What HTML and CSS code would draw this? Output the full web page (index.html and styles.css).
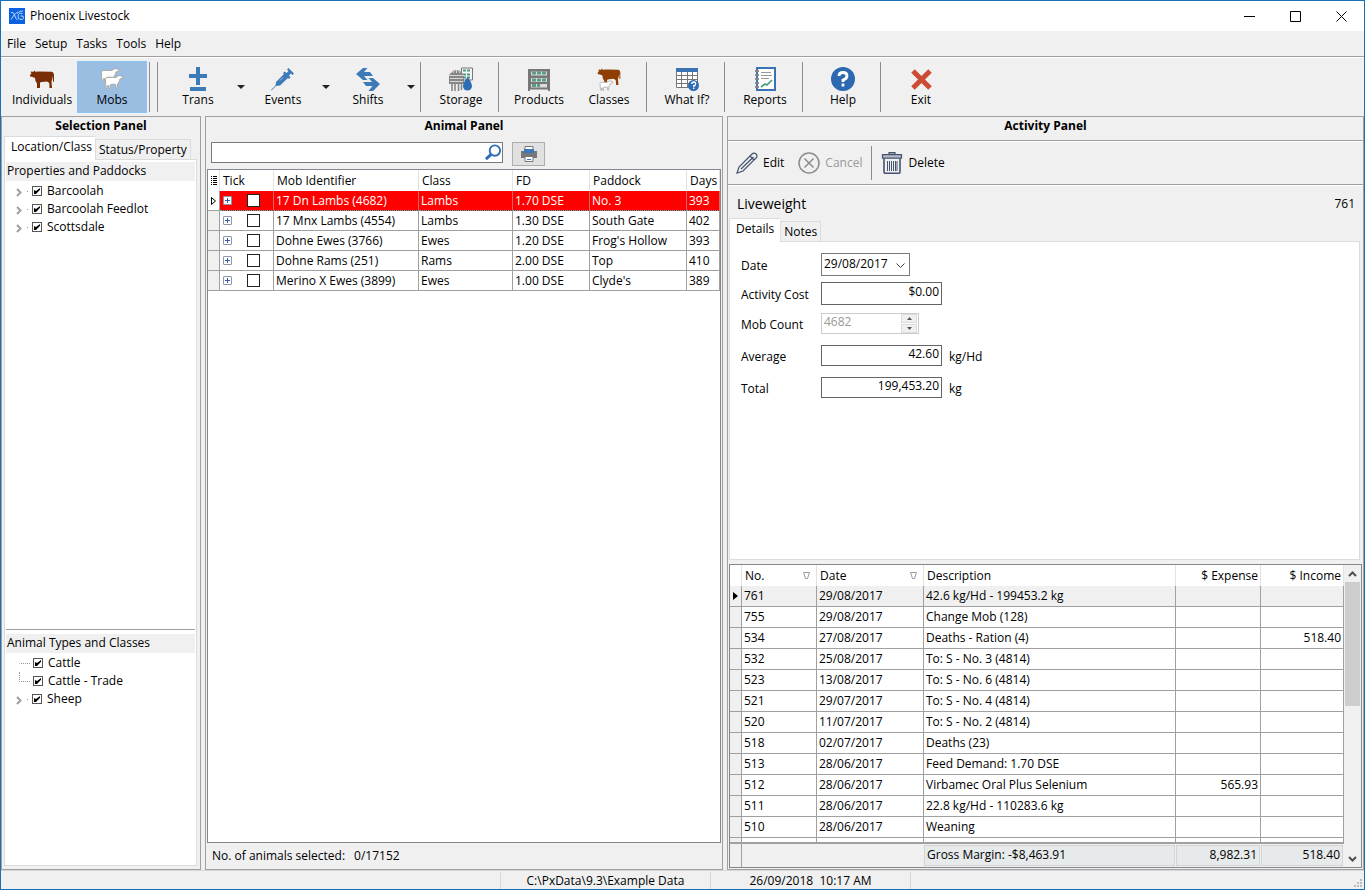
FILE: index.html
```html
<!DOCTYPE html>
<html lang="en">
<head>
<meta charset="utf-8">
<title>Phoenix Livestock</title>
<link rel="stylesheet" href="styles.css">
</head>
<body>
<svg class="defs" aria-hidden="true">
  <symbol id="cow" viewBox="0 0 24 18"><path d="M1.500 1.500L3.500 2 4 .5 5.500 1.800 9 1.500l13 .3 1.500 1.200.5 2v6.500l-1 .5V6l-.8 3.500-.7 2 .5 6.500H19.500l-.3-5-2.200-1.500-5 .5-2 .5V18H7v-4.500L5.500 11 5 8 2.500 7 .2 6.500 0 5l1.500-1.800L.5 2z"/></symbol>
  <symbol id="sheep" viewBox="-1 -1 23 17"><path d="M.5 4.500Q1 2 4 2.500h8Q13.500 1.500 14.500.8L17 .2l.5.800 2.500 1-.5 1.500-3 .7-.5 2.300-2 3-.5 5h-1.200l-.5-4.500H7L5.500 11 6 15H4.800L3.500 11 2.500 12.500v2.200H1.300L1 12z"/></symbol>
  <symbol id="chev" viewBox="0 0 6 8"><path d="M1 0.500L4.500 4 1 7.500" fill="none" stroke="#a0a0a0" stroke-width="2"/></symbol>
</svg>
<div class="window">
  <header class="titlebar">
    <svg class="logo" viewBox="0 0 16 16"><rect width="16" height="16" fill="#0a62e0"/><path d="M2 4.500q2.500-1 3.500 2.500T8.500 12M8.500 4Q5 6 2 11.500M8 5.500q3-3 6-2.500M13.500 5.500q-4-1-4.500 2.500t3 3.500 2-3.500H11.500" fill="none" stroke="#b9d4fb"/></svg>
    <span class="caption">Phoenix Livestock</span>
    <button class="winbtn" aria-label="Minimize"><svg width="11" height="11"><path d="M0 5.500h11" stroke="#000"/></svg></button>
    <button class="winbtn" aria-label="Maximize"><svg width="11" height="11"><path d="M.5.5h10v10H.5z" fill="none" stroke="#000"/></svg></button>
    <button class="winbtn" aria-label="Close"><svg width="11" height="11"><path d="M.5.5l10 10M10.500.5l-10 10" stroke="#000"/></svg></button>
  </header>
  <nav class="menubar"><button>File</button><button>Setup</button><button>Tasks</button><button>Tools</button><button>Help</button></nav>

  <div class="toolbar">
    <button class="tool"><svg viewBox="0 0 24 24"><use href="#cow" y="3" width="24" height="18" fill="#7a2e06"/></svg>Individuals</button>
    <button class="tool active"><svg viewBox="0 0 24 24"><g fill="#fff" stroke="#a8a49e"><use href="#sheep" x="0" y="0" width="21" height="16"/><use href="#sheep" x="4" y="7" width="21" height="16"/></g></svg>Mobs</button>
    <span class="sep"></span><span class="sep"></span>
    <button class="tool"><svg viewBox="0 0 24 24"><path d="M10 0h4v7h7v4h-7v7h-4v-7H3V7h7zM4 20h16v4H4z" fill="#3d7ab8"/></svg>Trans</button>
    <button class="drop" aria-label="Trans options"><svg viewBox="0 0 8 4"><path d="M0 0h8L4 4z"/></svg></button>
    <button class="tool"><svg viewBox="0 0 24 24"><path d="M17.500 1l5.500 5.500-1.500 1.500-1.500-1.500-2 2 1.500 2-1.500 1.500-1-1L9 18.500l-4 .5-4.500 4.500L0 23l4.500-4.500L5 15l8-8-1-1 1.500-1.500 2 1.500 2-2L16 2.500z" fill="#3d7ab8"/><path d="M9 13.500l3-3" stroke="#9fbfdf" stroke-width="1"/></svg>Events</button>
    <button class="drop" aria-label="Events options"><svg viewBox="0 0 8 4"><path d="M0 0h8L4 4z"/></svg></button>
    <button class="tool"><svg viewBox="0 0 24 24"><path d="M0 7l7-6h4.500L8 5h6l3 4H8l3.500 4H7zM24 17l-7 7h-4.500l4-5H10l-3-4h9l-3.500-4H17z" fill="#3d7ab8"/></svg>Shifts</button>
    <button class="drop" aria-label="Shifts options"><svg viewBox="0 0 8 4"><path d="M0 0h8L4 4z"/></svg></button>
    <span class="sep"></span>
    <button class="tool"><svg viewBox="0 0 24 24"><path d="M12.500 1h11v12h-11z" fill="#f4f4f4" stroke="#777"/><path d="M14 3.500h8M14 7.500h8M14 10.500h8" stroke="#4d9b80" stroke-width="2" stroke-dasharray="3 1"/><path d="M0 8l5-5h5l5 5v9H0z" fill="#868686"/><path d="M0 8.500h15M1 11.500h13M1 14.500h13" stroke="#d6d6d6"/><path d="M4 6l2-3M7.500 6V3M11 6L9 3" stroke="#d6d6d6"/><path d="M3 17v7M6 17v7M9.500 17v7M12.500 17v6" stroke="#888" stroke-width="1.600"/><path d="M18.500 10q4.500 6 4.500 9a4.500 4.500 0 0 1-9 0q0-3 4.500-9z" fill="#2d6db5"/></svg>Storage</button>
    <span class="sep"></span>
    <button class="tool"><svg viewBox="0 0 24 24"><path d="M1 2h22v22h-2v-1.500H3V24H1z" fill="#777"/><path d="M4 4.500h16v4H4zM4 11h16v4H4zM4 17h16v3.500H4z" fill="#d9dcdb"/><path d="M5 6h14M5 13h14M5 18.500h8" stroke="#5f9c86" stroke-width="3" stroke-dasharray="4 1"/></svg>Products</button>
    <button class="tool"><svg viewBox="0 0 24 24"><use href="#cow" width="24" height="17" y="1" fill="#8e3d05"/><use href="#sheep" x="2" y="13" width="15" height="11" fill="#fff" stroke="#999"/></svg>Classes</button>
    <span class="sep"></span>
    <button class="tool"><svg viewBox="0 0 24 24"><path d="M1.500 1.500h21v19h-21z" fill="#fff" stroke="#777"/><path d="M1 1h22v4H1z" fill="#3a73b4"/><path d="M1.500 8.500h21M1.500 12.500h21M1.500 16.500h21M6.500 5v15M12.500 5v15M17.500 5v15" stroke="#777"/><circle cx="18.500" cy="18.500" r="5.500" fill="#2d6db5"/><path d="M16.800 17q0-2 2-2t1.700 2-1.800 1.700v1M18.700 20.500V22" fill="none" stroke="#fff" stroke-width="1.400"/></svg>What If?</button>
    <span class="sep"></span>
    <button class="tool"><svg viewBox="0 0 24 24"><path d="M4 1h18v22H4z" fill="#fff" stroke="#3a73b4" stroke-width="2"/><path d="M8 5.500h10M8 8.500h11M8 11.500h8" stroke="#999"/><path d="M8 20l4-3 2 1 5-5" fill="none" stroke="#3f9b74" stroke-width="1.600"/><path d="M2 4h4M2 8h4M2 12h4M2 16h4M2 20h4" stroke="#888" stroke-width="2"/></svg>Reports</button>
    <span class="sep"></span>
    <button class="tool"><svg viewBox="0 0 24 24"><circle cx="12" cy="12" r="12" fill="#2c69b0"/><path d="M8 9q0-3.500 4-3.500t4 3.200-4 4.300v2M12 16.500v3" fill="none" stroke="#fff" stroke-width="2.800"/></svg>Help</button>
    <span class="sep"></span>
    <button class="tool"><svg viewBox="0 0 24 24"><path d="M4 4l17 17M21 4L4 21" stroke="#cb4b33" stroke-width="5"/></svg>Exit</button>
  </div>

  <main class="panels">
    <section class="panel selection">
      <h2>Selection Panel</h2>
      <div class="tabs"><button class="tab on">Location/Class</button><button class="tab">Status/Property</button></div>
      <div class="page">
        <div class="treebox grow">
          <h3>Properties and Paddocks</h3>
          <ul class="tree">
            <li><svg class="chev"><use href="#chev"/></svg><label><input type="checkbox" checked>Barcoolah</label></li>
            <li><svg class="chev"><use href="#chev"/></svg><label><input type="checkbox" checked>Barcoolah Feedlot</label></li>
            <li><svg class="chev"><use href="#chev"/></svg><label><input type="checkbox" checked>Scottsdale</label></li>
          </ul>
        </div>
        <div class="treebox types">
          <h3>Animal Types and Classes</h3>
          <ul class="tree">
            <li class="leaf first"><label><input type="checkbox" checked>Cattle</label></li>
            <li class="leaf"><label><input type="checkbox" checked>Cattle - Trade</label></li>
            <li><svg class="chev"><use href="#chev"/></svg><label><input type="checkbox" checked>Sheep</label></li>
          </ul>
        </div>
      </div>
    </section>

    <section class="panel animal">
      <h2>Animal Panel</h2>
      <div class="searchrow">
        <div class="search"><input type="text" aria-label="Search animals"><svg viewBox="0 0 18 18"><circle cx="11" cy="7" r="5.500" fill="none" stroke="#2d6db5" stroke-width="2"/><path d="M7 11l-5.500 5" stroke="#2d6db5" stroke-width="3"/></svg></div>
        <button class="print" aria-label="Print"><svg viewBox="0 0 16 16"><path d="M4 .5h8V4H4z" fill="#fff" stroke="#777"/><path d="M0 5h16v7H0z" fill="#777"/><path d="M3 3h10v4H3z" fill="#3a78bb"/><path d="M4 10.500h8v5H4z" fill="#fff" stroke="#777"/><path d="M6 13.500h4" stroke="#3a78bb"/></svg></button>
      </div>
      <div class="gridbox">
        <table class="mobs">
          <colgroup><col class="w12"><col class="w54"><col class="w145"><col class="w94"><col class="w77"><col class="w97"><col></colgroup>
          <thead><tr><th><svg class="lines" viewBox="0 0 6 9"><path d="M0 .5h1M2 .5h4M0 2.500h1M2 2.500h4M0 4.500h1M2 4.500h4M0 6.500h1M2 6.500h4M0 8.500h1M2 8.500h4" stroke="#000"/></svg></th><th>Tick</th><th>Mob Identifier</th><th>Class</th><th>FD</th><th>Paddock</th><th>Days</th></tr></thead>
          <tbody>
            <tr class="sel"><td><svg class="ptr" viewBox="0 0 5 8"><path d="M.5.5L4.500 4l-4 3.500z" fill="#fff" stroke="#000"/></svg></td><td><button class="plus" aria-label="Expand"></button><input type="checkbox" aria-label="Tick 17 Dn Lambs"></td><td>17 Dn Lambs (4682)</td><td>Lambs</td><td>1.70 DSE</td><td>No. 3</td><td>393</td></tr>
            <tr><td></td><td><button class="plus" aria-label="Expand"></button><input type="checkbox" aria-label="Tick 17 Mnx Lambs"></td><td>17 Mnx Lambs (4554)</td><td>Lambs</td><td>1.30 DSE</td><td>South Gate</td><td>402</td></tr>
            <tr><td></td><td><button class="plus" aria-label="Expand"></button><input type="checkbox" aria-label="Tick Dohne Ewes"></td><td>Dohne Ewes (3766)</td><td>Ewes</td><td>1.20 DSE</td><td>Frog's Hollow</td><td>393</td></tr>
            <tr><td></td><td><button class="plus" aria-label="Expand"></button><input type="checkbox" aria-label="Tick Dohne Rams"></td><td>Dohne Rams (251)</td><td>Rams</td><td>2.00 DSE</td><td>Top</td><td>410</td></tr>
            <tr><td></td><td><button class="plus" aria-label="Expand"></button><input type="checkbox" aria-label="Tick Merino X Ewes"></td><td>Merino X Ewes (3899)</td><td>Ewes</td><td>1.00 DSE</td><td>Clyde's</td><td>389</td></tr>
          </tbody>
        </table>
      </div>
      <p class="count"><span>No. of animals selected:</span><span>0/17152</span></p>
    </section>

    <section class="panel activity">
      <h2>Activity Panel</h2>
      <div class="actions">
        <button><svg class="pencil" viewBox="0 0 22 22"><path d="M1 21l2-6L16 2q2-2 4 0t0 4L7 19zM14 4l4 4M17.500 5L5 17" fill="none" stroke="#44546e" stroke-width="1.200"/></svg>Edit</button>
        <button disabled><svg viewBox="0 0 22 22"><circle cx="11" cy="11" r="10" fill="none" stroke="#8c8c8c" stroke-width="1.500"/><path d="M6.500 6.500l9 9M15.500 6.500l-9 9" stroke="#8c8c8c" stroke-width="1.500"/></svg>Cancel</button>
        <span class="bar"></span>
        <button><svg viewBox="0 0 22 22"><path d="M8 2V.7h6V2M1.500 2.700h19v3.500h-19z" fill="#b8bdc6" stroke="#44546e" stroke-width="1.200"/><path d="M3 6.500V20q0 1.300 1.500 1.300h13Q19 21.300 19 20V6.500" fill="none" stroke="#44546e" stroke-width="1.600"/><path d="M6.500 9v10M8.500 9v10M10.500 9v10M12.500 9v10M14.500 9v10M16 9v10" stroke="#44546e"/></svg>Delete</button>
      </div>
      <div class="heading"><strong>Liveweight</strong><span>761</span></div>
      <div class="tabs"><button class="tab on">Details</button><button class="tab">Notes</button></div>
      <form class="page details">
        <div class="field"><label for="date">Date</label><div class="combo"><select id="date"><option>29/08/2017</option></select><svg viewBox="0 0 9 5"><path d="M.5.5l4 4 4-4" fill="none" stroke="#444"/></svg></div></div>
        <div class="field cost"><label for="cost">Activity Cost</label><input id="cost" class="tall" type="text" value="$0.00"></div>
        <div class="field"><label for="mobcount">Mob Count</label><div class="spin"><input id="mobcount" type="text" value="4682" disabled><span class="steps"><button type="button" disabled aria-label="Increase"><svg viewBox="0 0 5 3"><path d="M0 3h5L2.500 0z"/></svg></button><button type="button" disabled aria-label="Decrease"><svg viewBox="0 0 5 3"><path d="M0 0h5L2.500 3z"/></svg></button></span></div></div>
        <div class="field"><label for="avg">Average</label><input id="avg" type="text" value="42.60"><span>kg/Hd</span></div>
        <div class="field"><label for="total">Total</label><input id="total" type="text" value="199,453.20"><span>kg</span></div>
      </form>
      <div class="ledger">
        <div class="ledgermain">
          <div class="rows">
            <table class="acts">
              <colgroup><col class="w12"><col class="w75"><col class="w107"><col><col class="w85"><col class="w83"></colgroup>
              <thead><tr><th></th><th><span class="h">No.<svg viewBox="0 0 7 7"><path d="M.5.5h6L4.500 6.500h-2z" fill="none" stroke="#999"/></svg></span></th><th><span class="h">Date<svg viewBox="0 0 7 7"><path d="M.5.5h6L4.500 6.500h-2z" fill="none" stroke="#999"/></svg></span></th><th>Description</th><th class="num">$ Expense</th><th class="num">$ Income</th></tr></thead>
              <tbody>
                <tr class="cur"><td><svg class="ptr" viewBox="0 0 5 8"><path d="M0 0l5 4-5 4z"/></svg></td><td>761</td><td>29/08/2017</td><td>42.6 kg/Hd - 199453.2 kg</td><td class="num"></td><td class="num"></td></tr>
                <tr><td></td><td>755</td><td>29/08/2017</td><td>Change Mob (128)</td><td class="num"></td><td class="num"></td></tr>
                <tr><td></td><td>534</td><td>27/08/2017</td><td>Deaths - Ration (4)</td><td class="num"></td><td class="num">518.40</td></tr>
                <tr><td></td><td>532</td><td>25/08/2017</td><td>To: S - No. 3 (4814)</td><td class="num"></td><td class="num"></td></tr>
                <tr><td></td><td>523</td><td>13/08/2017</td><td>To: S - No. 6 (4814)</td><td class="num"></td><td class="num"></td></tr>
                <tr><td></td><td>521</td><td>29/07/2017</td><td>To: S - No. 4 (4814)</td><td class="num"></td><td class="num"></td></tr>
                <tr><td></td><td>520</td><td>11/07/2017</td><td>To: S - No. 2 (4814)</td><td class="num"></td><td class="num"></td></tr>
                <tr><td></td><td>518</td><td>02/07/2017</td><td>Deaths (23)</td><td class="num"></td><td class="num"></td></tr>
                <tr><td></td><td>513</td><td>28/06/2017</td><td>Feed Demand: 1.70 DSE</td><td class="num"></td><td class="num"></td></tr>
                <tr><td></td><td>512</td><td>28/06/2017</td><td>Virbamec Oral Plus Selenium</td><td class="num">565.93</td><td class="num"></td></tr>
                <tr><td></td><td>511</td><td>28/06/2017</td><td>22.8 kg/Hd - 110283.6 kg</td><td class="num"></td><td class="num"></td></tr>
                <tr><td></td><td>510</td><td>28/06/2017</td><td>Weaning</td><td class="num"></td><td class="num"></td></tr>
                <tr><td></td><td></td><td></td><td></td><td class="num"></td><td class="num"></td></tr>
              </tbody>
            </table>
          </div>
          <div class="totals"><span class="ind"></span><span></span><span class="cell">Gross Margin: -$8,463.91</span><span class="cell num">8,982.31</span><span class="cell num">518.40</span></div>
        </div>
        <div class="scroll"><button aria-label="Scroll up"><svg viewBox="0 0 9 6"><path d="M1 5l3.500-3.500L8 5" fill="none" stroke="#505050" stroke-width="2"/></svg></button><span class="thumb"></span><button aria-label="Scroll down"><svg viewBox="0 0 9 6"><path d="M1 1l3.500 3.500L8 1" fill="none" stroke="#505050" stroke-width="2"/></svg></button></div>
      </div>
    </section>
  </main>

  <footer class="status"><span></span><span>C:\PxData\9.3\Example Data</span><span>26/09/2018&nbsp; 10:17 AM</span><svg class="grip" viewBox="0 0 8 8"><path d="M6 0h2v2H6zM3 3h2v2H3zM6 3h2v2H6zM0 6h2v2H0zM3 6h2v2H3zM6 6h2v2H6z" fill="#bdbdbd"/></svg></footer>
</div>
</body>
</html>
```
FILE: styles.css
```css
* { box-sizing: border-box; }
body { margin: 0; background: #f0f0f0; color: #000; font: 12px/16px "Open Sans", "Noto Sans", sans-serif; }
button, input, select { font: inherit; color: inherit; margin: 0; padding: 0; border: 0; border-radius: 0; background: none; }
h2, h3, p, ul { margin: 0; padding: 0; }
ul { list-style: none; }
svg { display: block; flex: none; }
.defs { position: absolute; width: 0; height: 0; }

.window { display: flex; flex-direction: column; height: 100vh; border: 1px solid #1771b6; overflow: hidden; }
.titlebar { display: flex; align-items: center; height: 30px; flex: none; background: #fff; padding-left: 8px; }
.logo { width: 16px; height: 16px; }
.caption { flex: 1; padding-left: 5px; }
.winbtn { width: 46px; height: 29px; display: flex; align-items: center; justify-content: center; }
.menubar { display: flex; align-items: center; height: 26px; flex: none; padding-left: 6px; gap: 9px; border-bottom: 1px solid #a0a0a0; }

.toolbar { display: flex; align-items: stretch; height: 59px; flex: none; padding: 3px 6px; border-top: 1px solid #fff; }
.tool { width: 70px; flex: none; display: flex; flex-direction: column; align-items: center; gap: 1px; padding-top: 5px; border: 1px solid transparent; white-space: nowrap; }
.tool svg { width: 24px; height: 24px; }
.tool.active { background: #9abde2; border-color: #8cc4f4; }
.sep { width: 8px; flex: none; padding: 1px 0; }
.sep::before { content: ""; display: block; width: 1px; height: 50px; margin-left: 2px; background: #8c8c8c; }
.drop { width: 15px; flex: none; display: flex; justify-content: center; padding-top: 24px; }
.drop svg { width: 8px; height: 4px; fill: #222; }

.panels { flex: 1; min-height: 0; display: grid; grid-template-columns: 200px 518px minmax(0, 1fr); gap: 4px; }
.panel { display: flex; flex-direction: column; min-height: 0; min-width: 0; border: 1px solid #a0a0a0; }
.panel h2 { font-size: 12px; line-height: 16px; text-align: center; padding: 1px 0 2px; flex: none; }
.tabs { display: flex; align-items: flex-end; flex: none; }
.tab { height: 21px; padding: 0 3px; margin-bottom: -1px; border: 1px solid #dcdcdc; background: #f0f0f0; white-space: nowrap; }
.tab.on { height: 24px; background: #fff; border-bottom-color: #fff; padding-bottom: 2px; position: relative; z-index: 1; border-right: 0; }
.page { flex: 1; min-height: 0; background: #fff; border: 1px solid #dcdcdc; }

.selection .tabs { padding-left: 2px; }
.selection .tab.on { padding-left: 6px; }
.selection .page { margin: 0 3px 3px 2px; padding: 2px 1px; display: flex; flex-direction: column; }
.treebox.grow { flex: 1; }
.treebox.types { height: 234px; border-top: 1px solid #a0a0a0; padding-top: 4px; }
.treebox h3 { font-size: 12px; font-weight: 400; line-height: 17px; padding: 0 1px 2px; background: #f0f0f0; margin-bottom: 1px; }
.tree li { display: flex; align-items: center; height: 18px; padding-left: 10px; }
.tree li::before { content: ""; order: 1; width: 1px; height: 1px; background: #999; margin: 1px 4px 0 5px; }
.tree label { order: 2; display: flex; align-items: center; gap: 5px; }
.tree .chev { width: 6px; height: 9px; margin-top: 3px; }
.tree .leaf { padding-left: 13px; }
.tree .leaf::before { order: 0; width: 10px; height: 9px; background: none; border: dotted #999; border-width: 0 0 1px 1px; margin: 0 3px 0 0; align-self: flex-start; }
.tree .first::before { border-left-color: transparent; }
.tree .leaf label { height: 18px; }
input[type="checkbox"] { appearance: none; flex: none; background: #fff; }
.tree input { width: 10px; height: 10px; border: 1px solid #555; }
.tree input:checked::before { content: ""; display: block; width: 8px; height: 8px; background: #000; clip-path: polygon(12% 38%, 38% 50%, 88% 12%, 88% 35%, 38% 88%, 12% 88%); }

.searchrow { display: flex; gap: 9px; padding: 6px 5px 3px; flex: none; }
.search { width: 292px; height: 21px; border: 1px solid #7a7a7a; background: #fff; display: flex; align-items: center; }
.search input { flex: 1; min-width: 0; outline: 0; }
.search svg { width: 18px; height: 17px; }
.print { width: 33px; height: 24px; border: 1px solid #adadad; background: #e1e1e1; display: flex; align-items: center; justify-content: center; }
.print svg { width: 16px; height: 16px; }
.gridbox { flex: 1; min-height: 0; margin: 0 1px; border: 1px solid #828790; background: #fff; overflow: hidden; }
table { border-collapse: separate; border-spacing: 0; table-layout: fixed; width: 100%; }
th, td { padding: 0 3px; text-align: left; font-weight: 400; white-space: nowrap; overflow: hidden; }
th { border-right: 1px solid #e2e2e2; }
td { border-right: 1px solid #a0a0a0; border-bottom: 1px solid #a0a0a0; padding-left: 2px; }
td:first-child { background: #f0f0f0; }
th:first-child, td:first-child { padding: 0; }
td .ptr { width: 5px; height: 8px; margin: 0 auto; }
.w12 { width: 12px; } .w54 { width: 54px; } .w145 { width: 145px; } .w94 { width: 94px; }
.w77 { width: 77px; } .w97 { width: 97px; } .w75 { width: 75px; } .w107 { width: 107px; }
.w85 { width: 85px; } .w83 { width: 83px; }
.mobs th { height: 21px; }
.mobs td { height: 20px; }
.mobs .lines { width: 6px; height: 9px; margin-left: 3px; }
.sel td:not(:first-child) { background: #f00; color: #fff; border-bottom: 1px dotted #36c0c0; border-right-color: #d66; }
.sel td:first-child { background: #fff; }
.plus { width: 9px; height: 9px; border: 1px solid #8c98a8; border-radius: 1px; vertical-align: middle; margin: 0 15px 2px 1px;
  background: linear-gradient(#345bb0, #345bb0) center / 5px 1px no-repeat, linear-gradient(#345bb0, #345bb0) center / 1px 5px no-repeat, #fff; }
.mobs input { width: 13px; height: 13px; border: 1px solid #222; vertical-align: middle; margin-bottom: 1px; }
.count { display: flex; gap: 9px; padding: 5px 5px 5px 6px; height: 26px; flex: none; }

.activity h2 { padding-bottom: 6px; border-bottom: 1px solid #a0a0a0; }
.actions { display: flex; align-items: center; gap: 14px; height: 44px; flex: none; padding-left: 8px; border-top: 1px solid #fff; border-bottom: 1px solid #a0a0a0; }
.actions button { display: flex; align-items: center; gap: 5px; }
.actions button:disabled { color: #9a9a9a; }
.actions svg { width: 22px; height: 22px; }
.actions .bar { width: 1px; height: 34px; background: #8c8c8c; margin: 0 -5px; }
.heading { display: flex; justify-content: space-between; align-items: center; height: 33px; flex: none; padding: 3px 8px 0 9px; border-top: 1px solid #fff; }
.heading strong { font-size: 14px; font-weight: 400; line-height: 20px; }
.activity .tabs { padding-left: 1px; }
.activity .tab.on { padding-left: 6px; padding-right: 6px; }
.activity .page { margin: 0 3px 4px 1px; }
.details { padding: 8px 0 0 11px; }
.field { display: flex; align-items: center; height: 32px; }
.field label { width: 80px; padding-top: 2px; }
.field:first-child { height: 30px; }
.field.cost { height: 28px; }
.field > input { width: 121px; height: 21px; border: 1px solid #646464; background: #fff; text-align: right; padding: 0 2px 3px; margin-bottom: 2px; }
.field > input.tall { height: 23px; }
.field > span { padding: 2px 0 0 7px; }
.combo { width: 89px; height: 23px; border: 1px solid #7a7a7a; display: flex; align-items: center; position: relative; margin-bottom: 2px; }
.combo select { appearance: none; width: 100%; height: 21px; padding-left: 2px; }
.combo svg { position: absolute; right: 4px; top: 9px; width: 9px; height: 5px; pointer-events: none; }
.spin { width: 98px; height: 21px; border: 1px solid #ccc; display: flex; margin-bottom: 2px; }
.spin input { flex: 1; min-width: 0; padding: 0 2px 2px; color: #999; }
.steps { width: 16px; display: grid; grid-template-rows: 1fr 1fr; margin: 0 1px; gap: 1px; }
.steps button { background: #f0f0f0; border: 1px solid #ddd; display: flex; align-items: center; justify-content: center; }
.steps svg { width: 5px; height: 3px; fill: #555; }

.ledger { display: flex; height: 304px; flex: none; margin: 0 1px 1px; border: 1px solid #828790; background: #fff; }
.ledgermain { flex: 1; min-width: 0; display: flex; flex-direction: column; }
.rows { flex: 1; min-height: 0; overflow: hidden; }
.acts th { height: 21px; }
.acts td { height: 21px; }
.acts .num { text-align: right; padding-right: 2px; }
.h { display: flex; justify-content: space-between; align-items: center; padding-right: 3px; }
.h svg { width: 7px; height: 7px; }
.cur td { background: #f0f0f0; }
.totals { flex: none; height: 25px; display: grid; grid-template-columns: 12px 182px minmax(0, 1fr) 85px 83px; background: #f0f0f0; border-top: 2px solid #a0a0a0; }
.totals .ind { border-right: 1px solid #a0a0a0; }
.totals .cell { margin: 1px 1px 1px 0; border: 1px solid #d4d4d4; background: #e6eaeb; padding: 1px 2px; }
.totals .num { text-align: right; }
.scroll { width: 17px; flex: none; display: flex; flex-direction: column; background: #f0f0f0; }
.scroll button { height: 17px; flex: none; display: flex; align-items: center; justify-content: center; }
.scroll svg { width: 9px; height: 6px; }
.thumb { display: block; width: 15px; height: 124px; margin: 0 1px auto; background: #cdcdcd; }

.status { flex: none; height: 19px; display: flex; align-items: stretch; border-top: 1px solid #d7d7d7; }
.status span { border-right: 1px solid #d7d7d7; width: 210px; text-align: center; line-height: 18px; margin: 1px 0 0; }
.status span:first-child { width: 500px; }
.status span:nth-child(3) { width: 200px; }
.grip { width: 8px; height: 8px; margin: auto 2px 2px auto; }
```
